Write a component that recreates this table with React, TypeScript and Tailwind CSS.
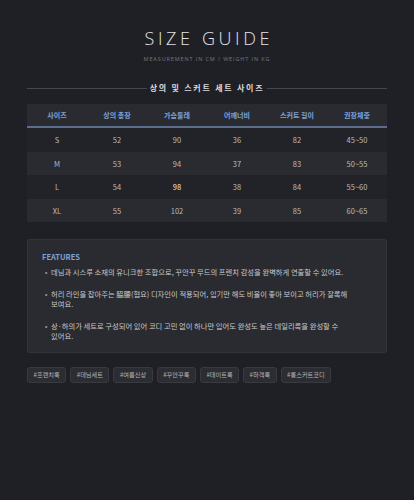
import React from "react";

const headers = ["사이즈", "상의 총장", "가슴둘레", "어깨너비", "스커트 길이", "권장체중"];
const rows = [
  ["S", "52", "90", "36", "82", "45~50"],
  ["M", "53", "94", "37", "83", "50~55"],
  ["L", "54", "98", "38", "84", "55~60"],
  ["XL", "55", "102", "39", "85", "60~65"],
];
const features = [
  "데님과 시스루 소재의 유니크한 조합으로, 꾸안꾸 무드의 프렌치 감성을 완벽하게 연출할 수 있어요.",
  "허리 라인을 잡아주는 脇腰(협요) 디자인이 적용되어, 입기만 해도 비율이 좋아 보이고 허리가 잘록해 보여요.",
  "상·하의가 세트로 구성되어 있어 코디 고민 없이 하나만 입어도 완성도 높은 데일리룩을 완성할 수 있어요.",
];
const tags = ["#프렌치룩", "#데님세트", "#여름신상", "#꾸안꾸룩", "#데이트룩", "#하객룩", "#롱스커트코디"];

export default function App() {
  return (
    <div
      className="min-h-[500px] w-[414px] bg-[#1f2025] px-[27px] pt-[28px] pb-6"
      style={{ fontFamily: '"Noto Sans CJK KR", "Noto Sans", sans-serif' }}
    >
      <div className="flex flex-col items-center">
        <h1
          className="text-[18px] leading-[20px] font-light tracking-[0.2em] text-[#e4e4e6] pl-[0.2em]"
          style={{ fontFamily: '"Open Sans", "Noto Sans", sans-serif' }}
        >
          SIZE GUIDE
        </h1>
        <p
          className="mt-[7px] text-[5.5px] leading-[8px] tracking-[0.16em] text-[#76777d]"
          style={{ fontFamily: '"Open Sans", "Noto Sans", sans-serif' }}
        >
          MEASUREMENT IN CM / WEIGHT IN KG
        </p>
      </div>

      <div className="mt-[19px] flex items-center gap-[3px]">
        <div className="h-px flex-1 bg-[#45474e]" />
        <span className="text-[8px] leading-[12px] font-bold tracking-[0.22em] text-[#dcdcdf]">
          상의 및 스커트 세트 사이즈
        </span>
        <div className="h-px flex-1 bg-[#45474e]" />
      </div>

      <div className="mt-[10px] overflow-hidden bg-[#222328]">
        <div className="grid grid-cols-6 h-[24px] items-center bg-[#2a2b30] border-b-2 border-[#5c6d8e]">
          {headers.map((h) => (
            <div key={h} className="text-center text-[7px] font-bold text-[#7fa2d8]">
              {h}
            </div>
          ))}
        </div>
        {rows.map((r, i) => (
          <div
            key={r[0]}
            className={`grid grid-cols-6 h-[23.5px] items-center ${i % 2 === 1 ? "bg-[#2a2b30]" : "bg-[#222328]"}`}
          >
            {r.map((c, j) => (
              <div
                key={j}
                className={`text-center text-[7.5px] ${i === 2 && j === 2 ? "text-[#dcc3a0] font-medium" : "text-[#b9babe]"}`}
              >
                {c}
              </div>
            ))}
          </div>
        ))}
      </div>

      <div className="mt-[17px] rounded-[3px] border border-[#33343a] bg-[#2a2b30] px-[14px] pt-[11px] pb-[11px]">
        <div className="text-[7.5px] leading-[12px] font-bold text-[#7fa2d8]">FEATURES</div>
        <ul className="mt-[4px] flex flex-col gap-[12px]">
          {features.map((f) => (
            <li key={f} className="flex text-[7.3px] leading-[10px] text-[#c8c9cc]">
              <span className="w-[9px] shrink-0 pl-[3px] text-[#7fa2d8]">•</span>
              <span className="pr-[18px] break-keep">{f}</span>
            </li>
          ))}
        </ul>
      </div>

      <div className="mt-[14px] flex flex-wrap gap-[4px]">
        {tags.map((t) => (
          <span
            key={t}
            className="h-[16px] rounded-[3px] border border-[#393a40] bg-[#2c2d32] px-[5.5px] text-[6.2px] leading-[14px] text-[#b5b6ba]"
          >
            {t}
          </span>
        ))}
      </div>
    </div>
  );
}
